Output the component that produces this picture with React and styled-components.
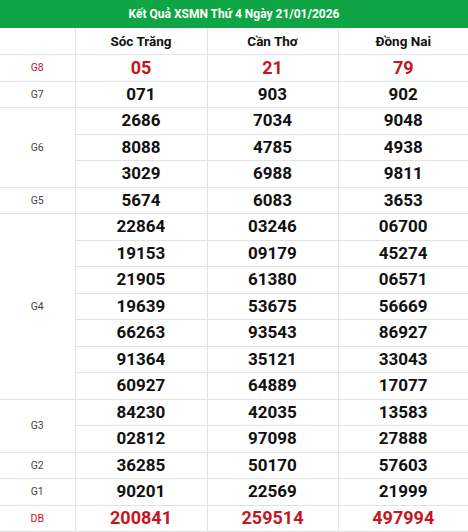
import styled, { createGlobalStyle } from "styled-components";

const GlobalStyle = createGlobalStyle`
  html, body {
    margin: 0;
    padding: 0;
    background: #fff;
    font-family: Roboto, "Liberation Sans", Arial, sans-serif;
  }
`;

const Wrapper = styled.div`
  width: 468px;
  height: 532px;
  overflow: hidden;
`;

const TitleBar = styled.div`
  height: 28px;
  background-color: #0fa544;
  color: #fff;
  font-weight: 700;
  font-size: 12px;
  display: flex;
  align-items: center;
  justify-content: center;
`;

const Table = styled.table`
  width: 468px;
  border-collapse: collapse;
  table-layout: fixed;
`;

const HeadCell = styled.th`
  height: 26px;
  border: 1px solid #e3e3e3;
  border-top: none;
  font-size: 13.5px;
  font-weight: 700;
  color: #111;
  text-align: center;
  padding: 0;
  &:first-child { border-left: none; }
  &:last-child { border-right: none; }
`;

const Label = styled.td`
  border: 1px solid #e3e3e3;
  border-left: none;
  font-size: 10.5px;
  color: ${p => (p.$red ? "#c8141c" : "#444")};
  text-align: center;
  padding: 0;
`;

const Num = styled.td`
  height: 25.5px;
  border: 1px solid #e3e3e3;
  font-size: ${p => (p.$red ? "18px" : "17px")};
  font-weight: 700;
  color: ${p => (p.$red ? "#c8141c" : "#111")};
  text-align: center;
  padding: 0;
  line-height: 1;
  &:last-child { border-right: none; }
`;

const provinces = ["Sóc Trăng", "Cần Thơ", "Đồng Nai"];

const prizes = [
  { name: "G8", red: true, rows: [["05", "21", "79"]] },
  { name: "G7", rows: [["071", "903", "902"]] },
  {
    name: "G6",
    rows: [
      ["2686", "7034", "9048"],
      ["8088", "4785", "4938"],
      ["3029", "6988", "9811"],
    ],
  },
  { name: "G5", rows: [["5674", "6083", "3653"]] },
  {
    name: "G4",
    rows: [
      ["22864", "03246", "06700"],
      ["19153", "09179", "45274"],
      ["21905", "61380", "06571"],
      ["19639", "53675", "56669"],
      ["66263", "93543", "86927"],
      ["91364", "35121", "33043"],
      ["60927", "64889", "17077"],
    ],
  },
  {
    name: "G3",
    rows: [
      ["84230", "42035", "13583"],
      ["02812", "97098", "27888"],
    ],
  },
  { name: "G2", rows: [["36285", "50170", "57603"]] },
  { name: "G1", rows: [["90201", "22569", "21999"]] },
  { name: "DB", red: true, rows: [["200841", "259514", "497994"]] },
];

function App() {
  return (
    <Wrapper>
      <GlobalStyle />
      <TitleBar>Kết Quả XSMN Thứ 4 Ngày 21/01/2026</TitleBar>
      <Table>
        <colgroup>
          <col style={{ width: "75px" }} />
          <col style={{ width: "132px" }} />
          <col style={{ width: "131px" }} />
          <col />
        </colgroup>
        <thead>
          <tr>
            <HeadCell />
            {provinces.map(p => <HeadCell key={p}>{p}</HeadCell>)}
          </tr>
        </thead>
        <tbody>
          {prizes.map(prize =>
            prize.rows.map((row, i) => (
              <tr key={prize.name + i}>
                {i === 0 && (
                  <Label rowSpan={prize.rows.length} $red={prize.red}>
                    {prize.name}
                  </Label>
                )}
                {row.map((n, j) => (
                  <Num key={j} $red={prize.red}>{n}</Num>
                ))}
              </tr>
            ))
          )}
        </tbody>
      </Table>
    </Wrapper>
  );
}

export default App;
